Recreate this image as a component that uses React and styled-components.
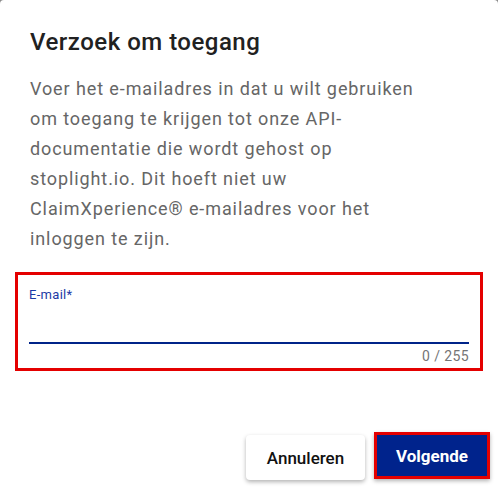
import React from 'react';
import styled, { createGlobalStyle } from 'styled-components';

const GlobalStyle = createGlobalStyle`
  html, body {
    margin: 0;
    padding: 0;
    background: #8a8a8a;
  }
  body {
    font-family: Roboto, 'Liberation Sans', sans-serif;
  }
`;

const Dialog = styled.div`
  width: 498px;
  height: 498px;
  box-sizing: border-box;
  background: #fff;
  border-radius: 4px 4px 0 0;
  display: flex;
  flex-direction: column;
  padding: 27px 0 18px;
`;

const Title = styled.h2`
  margin: 0 30px;
  font-size: 24px;
  line-height: 30px;
  font-weight: 500;
  color: #212121;
  letter-spacing: 0.5px;
`;

const Body = styled.p`
  margin: 17px 0 0 30px;
  width: 410px;
  font-size: 18px;
  line-height: 30px;
  color: #666;
  letter-spacing: 0.9px;
`;

const FieldFrame = styled.div`
  margin: 18px 15px 0;
  border: 3px solid #e40000;
  padding: 12px 11px 4px 11px;
  display: flex;
  flex-direction: column;
`;

const Label = styled.label`
  font-size: 13px;
  line-height: 15px;
  color: #1b3aa5;
  letter-spacing: 0.3px;
`;

const Input = styled.input`
  border: none;
  border-bottom: 2px solid #002489;
  outline: none;
  height: 42px;
  padding: 0;
  font: inherit;
  font-size: 16px;
  box-sizing: border-box;
  background: transparent;
`;

const Counter = styled.div`
  align-self: flex-end;
  margin-top: 4px;
  font-size: 14px;
  line-height: 16px;
  color: #757575;
  letter-spacing: 0.4px;
`;

const Actions = styled.div`
  margin-top: auto;
  display: flex;
  justify-content: flex-end;
  align-items: flex-end;
  gap: 9px;
  padding-right: 8px;
`;

const Button = styled.button`
  box-sizing: border-box;
  height: ${p => (p.$primary ? '47px' : '45px')};
  width: ${p => (p.$primary ? '116px' : '119px')};
  margin-bottom: ${p => (p.$primary ? '1px' : '0')};
  border-radius: ${p => (p.$primary ? '0' : '4px')};
  border: ${p => (p.$primary ? '3px solid #e40000' : 'none')};
  background: ${p => (p.$primary ? '#00238c' : '#fff')};
  color: ${p => (p.$primary ? '#fff' : '#111')};
  font-family: Roboto, 'Liberation Sans', sans-serif;
  font-size: 17px;
  font-weight: ${p => (p.$primary ? 700 : 500)};
  box-shadow: 0 2px 4px rgba(0, 0, 0, 0.3);
  cursor: pointer;
`;

export default function App() {
  return (
    <>
      <GlobalStyle />
      <Dialog>
        <Title>Verzoek om toegang</Title>
        <Body>
          Voer het e-mailadres in dat u wilt gebruiken om toegang te krijgen tot onze API-documentatie die wordt gehost op stoplight.io. Dit hoeft niet uw ClaimXperience® e-mailadres voor het inloggen te zijn.
        </Body>
        <FieldFrame>
          <Label>E-mail*</Label>
          <Input type="email" />
          <Counter>0 / 255</Counter>
        </FieldFrame>
        <Actions>
          <Button>Annuleren</Button>
          <Button $primary>Volgende</Button>
        </Actions>
      </Dialog>
    </>
  );
}
